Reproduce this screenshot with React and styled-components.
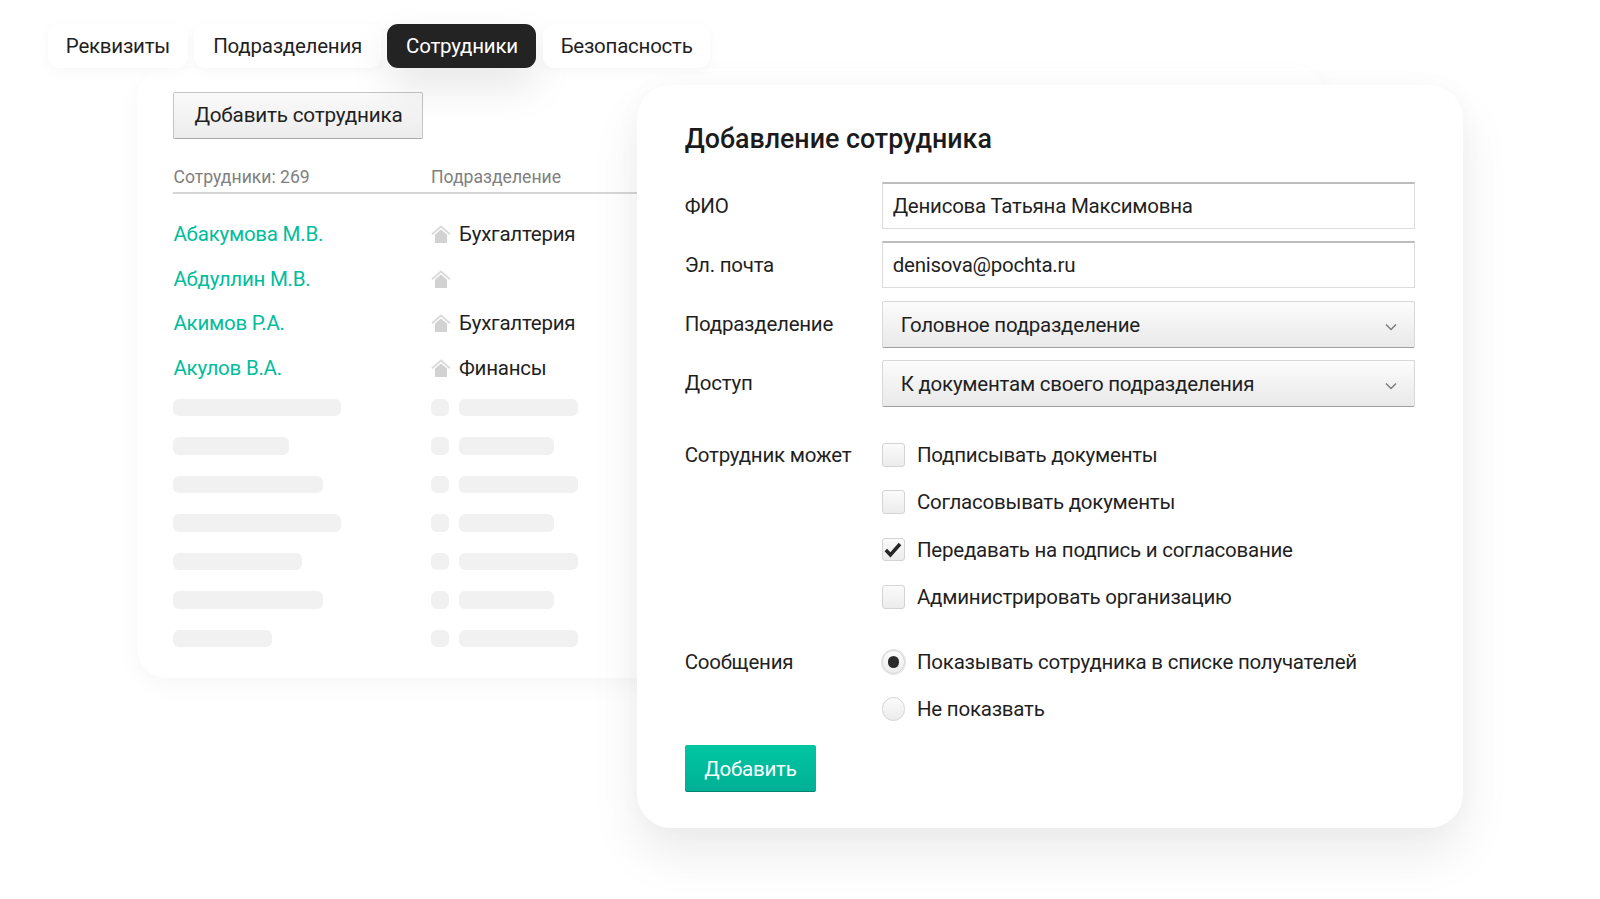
import React from "react";
import styled, { createGlobalStyle } from "styled-components";

const Global = createGlobalStyle`
  html, body { margin: 0; padding: 0; background: #fff; }
  body { font-family: Roboto, "Noto Sans", sans-serif; color: #1f1f1f; overflow: hidden; }
`;
const TEXT = "font-size: 20.500px; letter-spacing: -0.24px;";
const Page = styled.div`
  position: relative;
  width: 1600px;
  height: 899px;
  overflow: hidden;
  background: #fff;
`;
const Tabs = styled.div`
  position: relative;
  z-index: 2;
  display: flex;
  gap: 6.5px;
  padding: 24px 0 0 48px;
`;
const Tab = styled.div`
  width: ${p => p.$w}px;
  height: 43.500px;
  display: flex;
  align-items: center;
  justify-content: center;
  border-radius: 11px;
  ${TEXT}
  background: ${p => (p.$active ? "#232323" : "#fff")};
  color: ${p => (p.$active ? "#fff" : "#1f1f1f")};
  box-shadow: ${p => (p.$active ? "0 18px 40px rgba(0,0,0,.1)" : "0 3px 12px rgba(0,0,0,.035)")};
`;
const ListPanel = styled.section`
  width: 1190px;
  height: 610px;
  box-sizing: border-box;
  margin-left: 136.7px;
  padding: 24.300px 0 0 36.800px;
  border-radius: 30px;
  background: #fff;
  box-shadow: 0 8px 24px rgba(0,0,0,.035);
`;
const AddStaff = styled.div`
  width: 250px;
  height: 47px;
  box-sizing: border-box;
  display: flex;
  align-items: center;
  justify-content: center;
  border: 1px solid #c4c4c4;
  border-bottom-color: #aaa;
  border-radius: 2px;
  background: linear-gradient(#fafafa, #ececec);
  font-size: 20.700px;
  letter-spacing: -0.2px;
`;
const Grid = styled.div`
  display: grid;
  grid-template-columns: 257.500px 1fr;
  align-items: center;
`;
const HeadRow = styled(Grid)`
  margin-top: 24px;
  width: 470px;
  height: 29px;
  border-bottom: 2px solid #d6d6d6;
  font-size: 17.600px;
  color: #808080;
`;
const People = styled.div`
  margin-top: 18px;
`;
const PersonRow = styled(Grid)`
  height: 44.500px;
  ${TEXT}
`;
const PersonName = styled.span`
  color: #00bd9c;
`;
const Division = styled.div`
  display: flex;
  align-items: center;
  gap: 8px;
`;
const Ghosts = styled.div`
  margin-top: 9px;
  display: flex;
  flex-direction: column;
  gap: 21.200px;
`;
const GhostRow = styled(Grid)`
  height: 17.300px;
`;
const GhostCells = styled.div`
  display: flex;
  gap: 10px;
`;
const GhostBar = styled.div`
  width: ${p => p.$w}px;
  height: 17.300px;
  border-radius: 6px;
  background: #f1f1f1;
`;
const FormCard = styled.section`
  position: absolute;
  left: 636.700px;
  top: 84.700px;
  width: 826px;
  height: 743px;
  box-sizing: border-box;
  padding: 37px 48px 0;
  border-radius: 34px;
  background: #fff;
  box-shadow: 0 26px 50px rgba(0,0,0,.08), 0 0 30px rgba(0,0,0,.025);
`;
const Title = styled.h2`
  margin: 0;
  height: 34px;
  line-height: 34px;
  font-size: 26.800px;
  font-weight: 500;
  color: #1b1b1b;
`;
const Fields = styled.div`
  margin-top: 26.500px;
  display: flex;
  flex-direction: column;
  gap: 12.200px;
`;
const FieldRow = styled.div`
  display: grid;
  grid-template-columns: 197px 533px;
  align-items: center;
  ${TEXT}
`;
const TextField = styled.div`
  height: 47px;
  box-sizing: border-box;
  padding: 0 10px;
  display: flex;
  align-items: center;
  border: 1px solid #dcdcdc;
  border-top: 2px solid #bdbdbd;
  background: #fff;
`;
const SelectField = styled.div`
  height: 47px;
  box-sizing: border-box;
  padding: 2px 17px 0 18px;
  display: flex;
  align-items: center;
  justify-content: space-between;
  border: 1px solid #d8d8d8;
  border-bottom: 1px solid #9f9f9f;
  border-radius: 2px;
  background: linear-gradient(#fcfcfc, #e9e9e9);
  & > svg { margin-top: 3px; }
`;
const Options = styled.div`
  display: grid;
  grid-template-columns: 197px 533px;
  ${TEXT}
`;
const OptionLabel = styled.div`
  height: 24px;
  line-height: 24px;
  white-space: nowrap;
`;
const OptionList = styled.div`
  display: flex;
  flex-direction: column;
  gap: 23.300px;
`;
const Option = styled.div`
  display: flex;
  align-items: center;
  gap: 11.800px;
  height: 24px;
  white-space: nowrap;
`;
const Box = styled.div`
  width: 23.500px;
  height: 23.500px;
  box-sizing: border-box;
  display: flex;
  align-items: center;
  justify-content: center;
  border: 1px solid #d4d4d4;
  border-radius: ${p => (p.$round ? "50%" : "3px")};
  background: linear-gradient(#fbfbfb, #ececec);
  box-shadow: ${p => (p.$on && p.$round ? "0 0 0 1px #e4e4e4" : "none")};
`;
const Dot = styled.div`
  width: 11.500px;
  height: 11.500px;
  border-radius: 50%;
  background: #2b2b2b;
`;
const CheckGroup = styled(Options)`
  margin-top: 36.200px;
`;
const RadioGroup = styled(Options)`
  margin-top: 41px;
`;
const Submit = styled.div`
  margin-top: 24px;
  width: 131.500px;
  height: 47px;
  box-sizing: border-box;
  display: flex;
  align-items: center;
  justify-content: center;
  padding-top: 1px;
  border-radius: 2px;
  border-bottom: 1px solid #00866f;
  background: linear-gradient(#00c6a2, #00b096);
  color: #fff;
  ${TEXT}
`;

const House = () => (
  <svg width="20" height="18" viewBox="0 0 20 18">
    <path d="M4 9.500 10 4.500l6 5V18H4z" fill="#d2d2d2" />
    <path d="M1 9.200 10 1.500 19 9.200" fill="none" stroke="#dadada" strokeWidth="1.800" />
  </svg>
);
const Chevron = () => (
  <svg width="12" height="8" viewBox="0 0 12 8">
    <path d="M1 1.500 6 6.500l5-5" fill="none" stroke="#7d7d7d" strokeWidth="1.500" />
  </svg>
);
const Check = () => (
  <svg width="18" height="16" viewBox="0 0 18 16">
    <path d="M1.800 8 6.400 12.800 16 2" fill="none" stroke="#262626" strokeWidth="3.500" />
  </svg>
);

const tabs = [["Реквизиты", 139.8], ["Подразделения", 186.7], ["Сотрудники", 149], ["Безопасность", 167.3]];
const people = [
  ["Абакумова М.В.", "Бухгалтерия"],
  ["Абдуллин М.В.", ""],
  ["Акимов Р.А.", "Бухгалтерия"],
  ["Акулов В.А.", "Финансы"],
];
const ghosts = [
  [167.3, 118.4], [115.3, 95], [150, 118.4], [167.3, 95], [128.6, 118.4], [150, 95], [99, 118.4],
];
const checks = [
  ["Подписывать документы", false],
  ["Согласовывать документы", false],
  ["Передавать на подпись и согласование", true],
  ["Администрировать организацию", false],
];

export default function App() {
  return (
    <Page>
      <Global />
      <Tabs>
        {tabs.map(([t, w], i) => (
          <Tab key={t} $w={w} $active={i === 2}>{t}</Tab>
        ))}
      </Tabs>
      <ListPanel>
        <AddStaff>Добавить сотрудника</AddStaff>
        <HeadRow>
          <span>Сотрудники: 269</span>
          <span>Подразделение</span>
        </HeadRow>
        <People>
          {people.map(([n, d]) => (
            <PersonRow key={n}>
              <PersonName>{n}</PersonName>
              <Division><House />{d}</Division>
            </PersonRow>
          ))}
        </People>
        <Ghosts>
          {ghosts.map(([a, b], i) => (
            <GhostRow key={i}>
              <GhostBar $w={a} />
              <GhostCells>
                <GhostBar $w={18.4} />
                <GhostBar $w={b} />
              </GhostCells>
            </GhostRow>
          ))}
        </Ghosts>
      </ListPanel>
      <FormCard>
        <Title>Добавление сотрудника</Title>
        <Fields>
          <FieldRow><span>ФИО</span><TextField>Денисова Татьяна Максимовна</TextField></FieldRow>
          <FieldRow><span>Эл. почта</span><TextField>denisova@pochta.ru</TextField></FieldRow>
          <FieldRow><span>Подразделение</span><SelectField>Головное подразделение<Chevron /></SelectField></FieldRow>
          <FieldRow><span>Доступ</span><SelectField>К документам своего подразделения<Chevron /></SelectField></FieldRow>
        </Fields>
        <CheckGroup>
          <OptionLabel>Сотрудник может</OptionLabel>
          <OptionList>
            {checks.map(([t, on]) => (
              <Option key={t}><Box>{on && <Check />}</Box>{t}</Option>
            ))}
          </OptionList>
        </CheckGroup>
        <RadioGroup>
          <OptionLabel>Сообщения</OptionLabel>
          <OptionList>
            <Option><Box $round $on><Dot /></Box>Показывать сотрудника в списке получателей</Option>
            <Option><Box $round />Не показвать</Option>
          </OptionList>
        </RadioGroup>
        <Submit>Добавить</Submit>
      </FormCard>
    </Page>
  );
}
